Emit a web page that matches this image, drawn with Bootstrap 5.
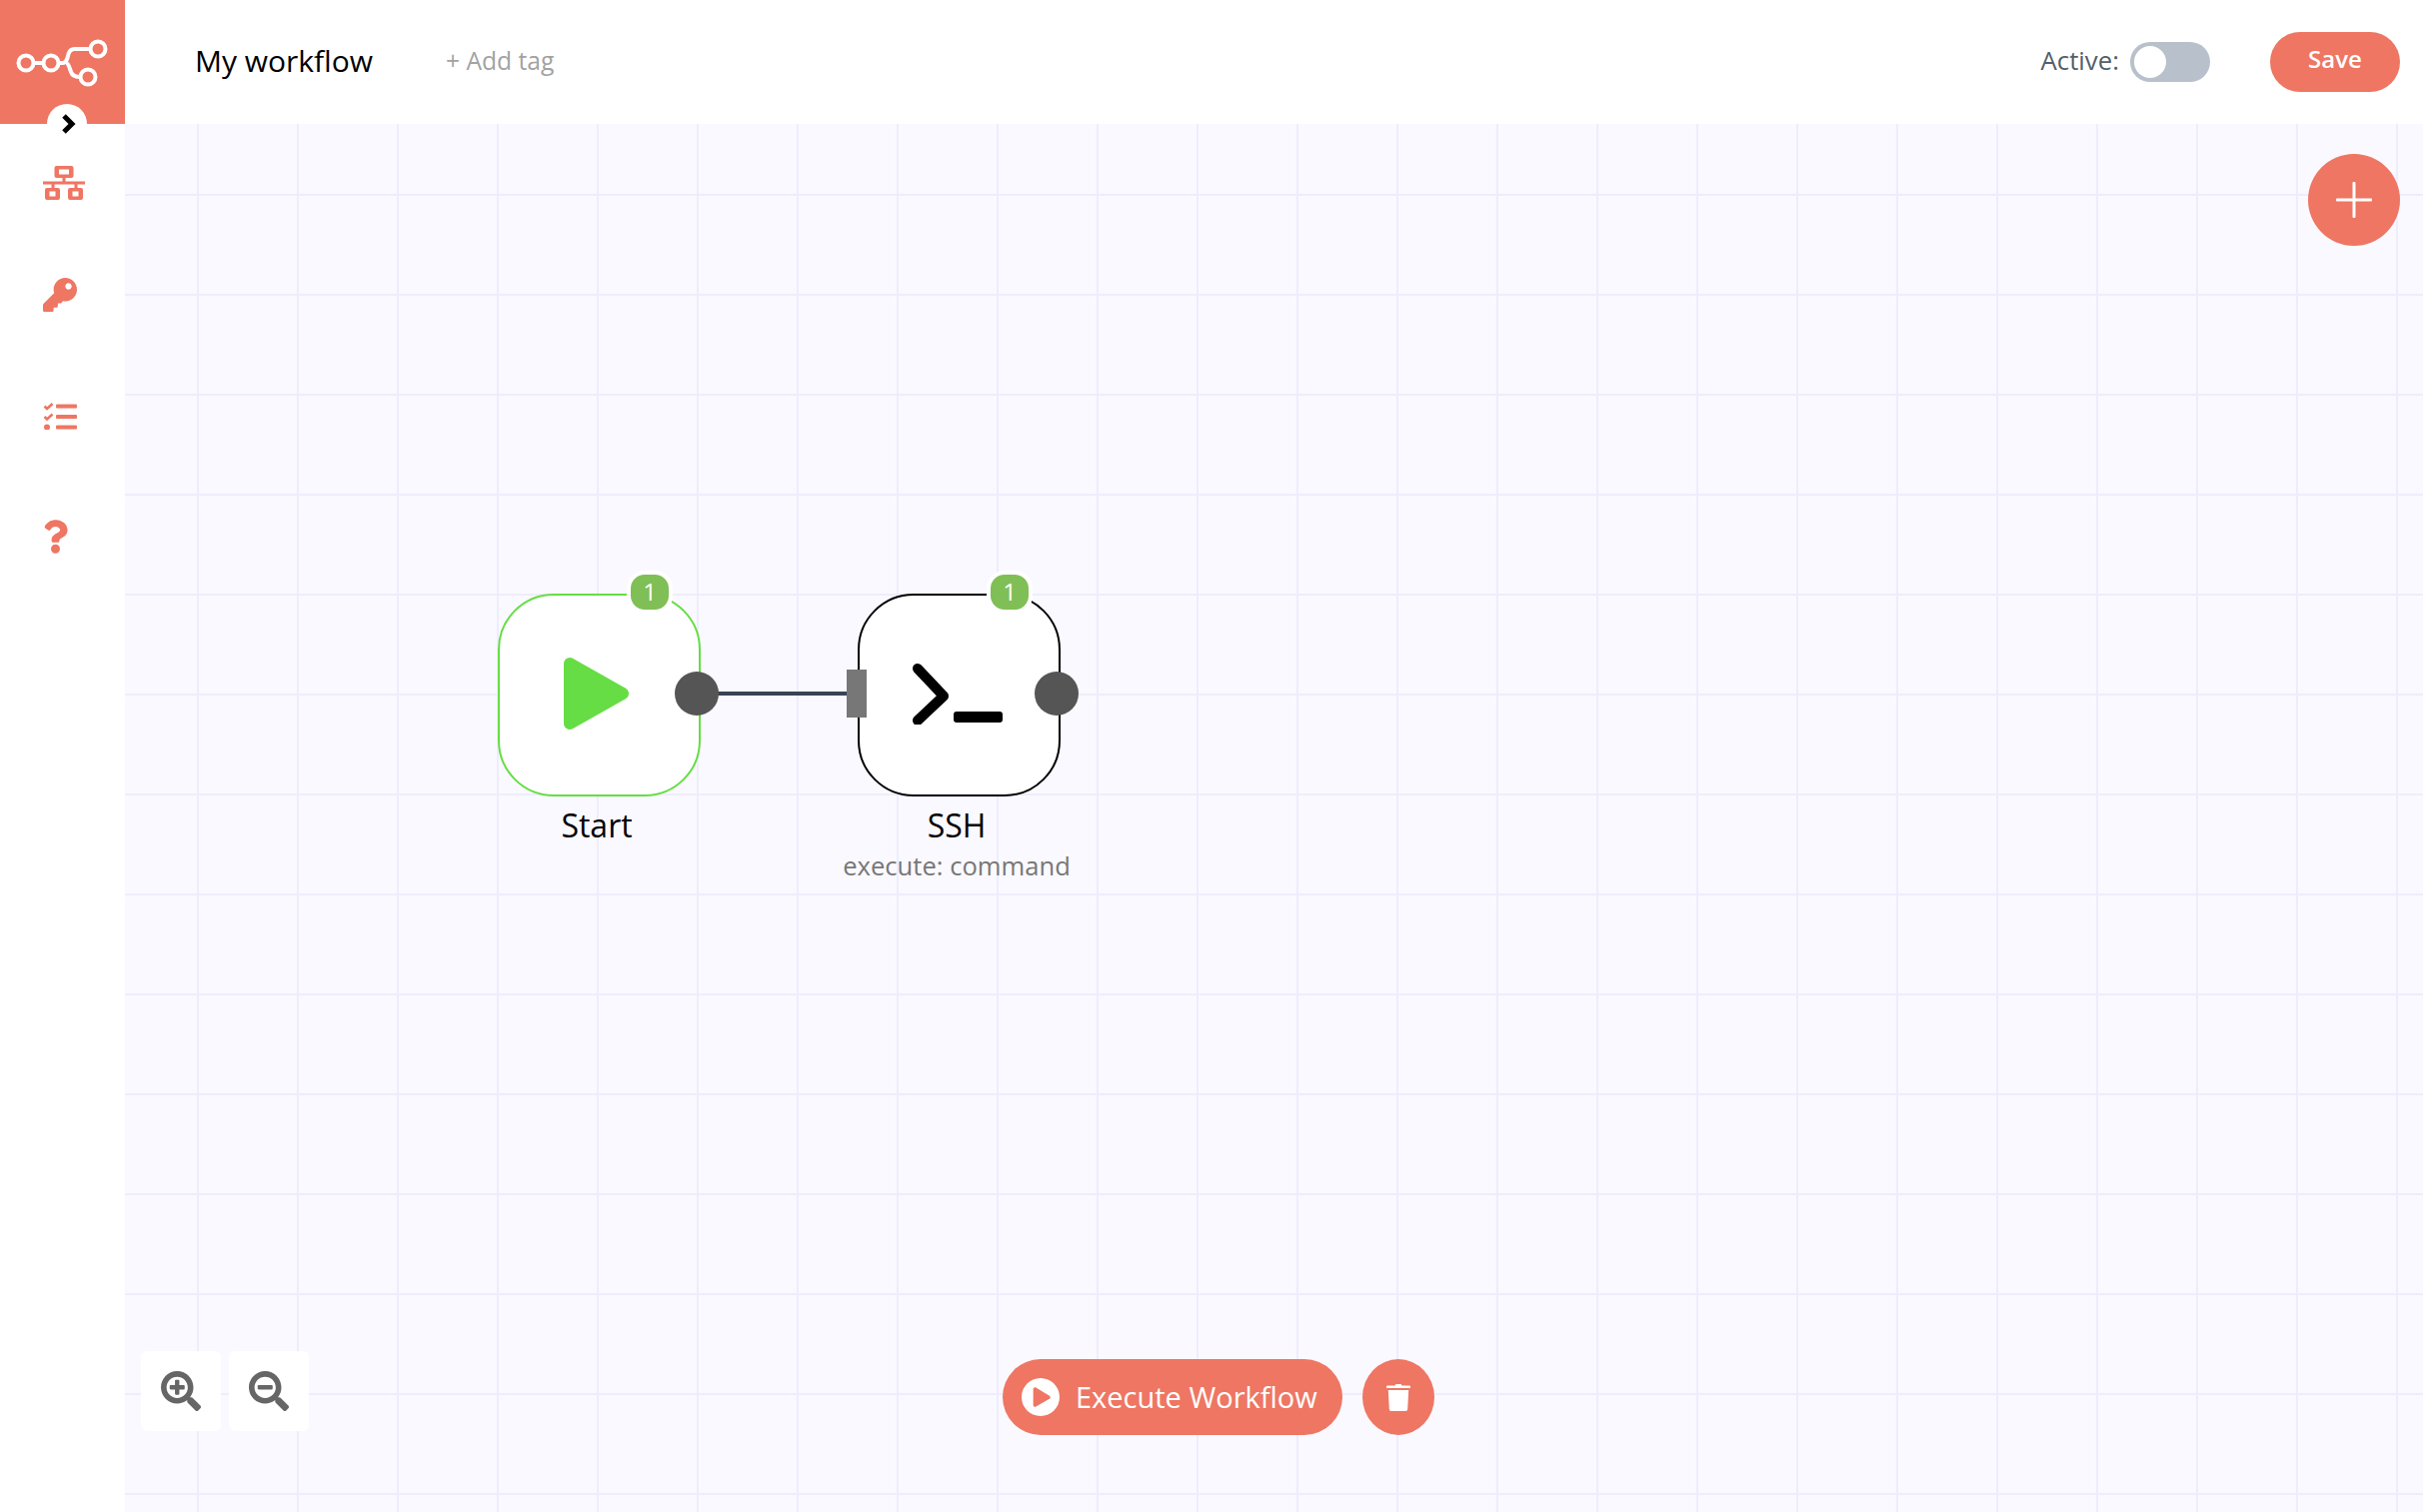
<!doctype html>
<html lang="en">
<head>
<meta charset="utf-8">
<title>My workflow</title>
<link href="https://cdn.jsdelivr.net/npm/bootstrap@5.3.0/dist/css/bootstrap.min.css" rel="stylesheet">
<style>
html,body{height:100%;margin:0}
body{font-family:"Open Sans","Liberation Sans",sans-serif;background:#fff;overflow:hidden;color:#000}
.app-shell{width:2424px;height:1513px}
.top-bar{height:124px;background:#fff}
.logo-box{width:125px;height:124px;background:#ee7663}
.wf-name{font-size:30px;line-height:40px;margin-left:70px;width:251px;color:#000;padding-bottom:3px}
.add-tag{font-size:24.600px;color:#a2a2a2;line-height:40px;padding-bottom:3px}
.active-label{font-size:25.800px;color:#555f6b;margin-right:11px;line-height:40px;padding-bottom:4px}
.toggle-track{width:80px;height:40px;border-radius:20px;background:#b8c1cb;padding:4px;margin-right:60px}
.toggle-knob{width:32px;height:32px;border-radius:50%;background:#fff}
.btn.save-btn{width:130px;height:60px;border-radius:30px;background:#ee7663;color:#fff;border:0;font-size:24px;font-weight:600;margin-right:23px;padding:0 0 6px}
.side-bar{width:125px;background:#fff;padding-top:42px}
.side-item{height:34px;margin-left:43px}
.side-net{margin-bottom:78px}
.side-key{margin-bottom:91px}
.side-tasks{height:27px;margin-bottom:90px}
.canvas-area{position:relative;background-color:#faf9ff;background-image:linear-gradient(to right,#eeedfd 2px,transparent 2px),linear-gradient(to bottom,#eeedfd 2px,transparent 2px);background-size:100px 100px;background-position:72px 0,0 70px}
.expand-dot{position:absolute;left:47px;top:104px;width:40px;height:40px;border-radius:50%;background:#fff}
.chev{margin-left:3px}
.add-fab{position:absolute;left:2184px;top:30px;width:92px;height:92px;border-radius:50%;background:#ee7663;border:0;padding:0}
.zoom-btn{position:absolute;top:1228px;width:80px;height:80px;background:#fff;border-radius:6px;border:0;padding:0}
.zoom-in{left:16px}.zoom-out{left:104px}
.run-btn{position:absolute;left:878px;top:1236px;width:340px;height:76px;border-radius:38px;background:#ee7663;color:#fff;border:0;font-size:29px;font-weight:500;padding:0 0 1px 73px;text-align:left;line-height:75px}
.run-ico{position:absolute;left:19px;top:19px}
.trash-btn{position:absolute;left:1238px;top:1236px;width:72px;height:76px;border-radius:50%;background:#ee7663;border:0;padding:0}
.wf-node{position:absolute;top:470px;width:203px;height:203px;background:#fff;border-radius:56px;border:2px solid #000}
.node-start{left:373px;border-color:#66dd44}
.node-ssh{left:733px}
.node-badge{position:absolute;top:447px;width:46px;height:43px;border:4px solid #fff;border-radius:18px;background:#7fbf55;color:#fff;font-size:24px;line-height:34px;text-align:center;font-weight:500}
.badge-start{left:502px}.badge-ssh{left:862px}
.out-dot{position:absolute;top:548px;width:44px;height:44px;border-radius:50%;background:#555}
.out-start{left:550px}.out-ssh{left:910px}
.in-port{position:absolute;left:722px;top:546px;width:20px;height:48px;background:#777}
.wire{position:absolute;left:590px;top:568px;width:135px;height:4px;background:#374455}
.node-icon{position:absolute}
.ico-start{left:438px;top:532px}.ico-ssh{left:783px;top:537px}
.node-label{position:absolute;top:682px;width:360px;text-align:center;font-size:32px;line-height:40px;color:#000}
.label-start{left:292px}.label-ssh{left:652px}
.node-sub{position:absolute;left:652px;top:727px;width:360px;text-align:center;font-size:25.600px;line-height:32px;color:#777}
</style>
</head>
<body>
<div class="app-shell d-flex flex-column position-relative">
  <header class="top-bar d-flex align-items-center">
    <div class="logo-box flex-shrink-0">
      <svg width="125" height="124" viewBox="0 0 125 124" fill="none" stroke="#fff" stroke-width="4"><circle cx="26" cy="63" r="7.500"/><circle cx="51" cy="63" r="7.500"/><circle cx="98" cy="49" r="7.500"/><circle cx="88" cy="77" r="7.500"/><path d="M33.500 63h10M58.500 63h4c3 0 4-2 5-5l1-4c1-3 3-5 6-5h16.500M66 63c2 0 3 3 4 6l1 3c1 3 3 5 9.500 5"/></svg>
    </div>
    <div class="wf-name">My workflow</div>
    <div class="add-tag">+ Add tag</div>
    <div class="ms-auto d-flex align-items-center">
      <span class="active-label">Active:</span>
      <span class="toggle-track d-block"><span class="toggle-knob d-block"></span></span>
      <button class="btn save-btn" type="button">Save</button>
    </div>
  </header>
  <div class="d-flex flex-grow-1">
    <nav class="side-bar flex-shrink-0">
      <div class="side-item side-net"><svg width="42" height="34" viewBox="0 0 42 34" fill="#ee7663" fill-rule="evenodd"><path d="M13.500 0h15a2 2 0 0 1 2 2v8a2 2 0 0 1-2 2h-6v3.500H42v3H34.500V22h3.500a2 2 0 0 1 2 2v8a2 2 0 0 1-2 2H27a2 2 0 0 1-2-2v-8a2 2 0 0 1 2-2h4.500v-3.500h-20V22H15a2 2 0 0 1 2 2v8a2 2 0 0 1-2 2H4a2 2 0 0 1-2-2v-8a2 2 0 0 1 2-2h4.500v-3.500H0v-3h19.500V12h-6a2 2 0 0 1-2-2V2a2 2 0 0 1 2-2zM16 3.500v5h10v-5zM6.500 25.500v5h6v-5zM29.500 25.500v5h6v-5z"/></svg></div>
      <div class="side-item side-key"><svg width="34" height="34" viewBox="0 0 512 512" fill="#ee7663"><path d="M512 176.001C512 273.203 433.202 352 336 352c-11.22 0-22.19-1.062-32.827-3.069l-24.012 27.014A23.999 23.999 0 0 1 261.223 384H224v40c0 13.255-10.745 24-24 24h-40v40c0 13.255-10.745 24-24 24H24c-13.255 0-24-10.745-24-24v-78.059c0-6.365 2.529-12.47 7.029-16.971l161.802-161.802C163.108 213.814 160 195.271 160 176 160 78.798 238.797.001 335.999 0 433.488-.001 512 78.511 512 176.001zM336 128c0 26.51 21.49 48 48 48s48-21.49 48-48-21.49-48-48-48-48 21.49-48 48z"/></svg></div>
      <div class="side-item side-tasks"><svg width="34" height="27" viewBox="0 0 34 27" fill="#ee7663"><rect x="13" y="1.500" width="21" height="4" rx="1"/><rect x="13" y="12" width="21" height="4" rx="1"/><rect x="13" y="22.500" width="21" height="4" rx="1"/><circle cx="4" cy="24.500" r="3"/><path d="M1.500 3.500l2.500 2.500L9.500 1M1.500 14l2.500 2.500L9.500 11.500" fill="none" stroke="#ee7663" stroke-width="2.600"/></svg></div>
      <div class="side-item"><svg width="25" height="34" viewBox="0 0 384 512" fill="#ee7663"><path d="M202.021 0C122.202 0 70.503 32.703 29.914 91.026c-7.363 10.58-5.093 25.086 5.178 32.874l43.138 32.709c10.373 7.865 25.132 6.026 33.253-4.148 25.049-31.381 43.63-49.449 82.757-49.449 30.764 0 68.816 19.799 68.816 49.631 0 22.552-18.617 34.134-48.993 51.164-35.423 19.86-82.299 44.576-82.299 106.405V320c0 13.255 10.745 24 24 24h72.471c13.255 0 24-10.745 24-24v-5.773c0-42.86 125.268-44.645 125.268-160.627C377.504 66.256 286.902 0 202.021 0zM192 373.459c-38.196 0-69.271 31.075-69.271 69.271 0 38.195 31.075 69.27 69.271 69.27s69.271-31.075 69.271-69.271-31.075-69.27-69.271-69.27z"/></svg></div>
    </nav>
    <main class="canvas-area flex-grow-1">
      <div class="wire"></div>
      <div class="wf-node node-start"></div>
      <div class="wf-node node-ssh"></div>
      <div class="node-badge badge-start">1</div>
      <div class="node-badge badge-ssh">1</div>
      <svg class="node-icon ico-start" width="68" height="76" viewBox="0 0 68 76"><path d="M7 8l53 30L7 68z" fill="#66dd44" stroke="#66dd44" stroke-width="12" stroke-linejoin="round"/></svg>
      <svg class="node-icon ico-ssh" width="100" height="64" viewBox="0 0 100 64"><path d="M10 8l26 27.500L10 60" fill="none" stroke="#000" stroke-width="10" stroke-linecap="round" stroke-linejoin="round"/><rect x="46" y="51" width="49" height="11" rx="3"/></svg>
      <div class="out-dot out-start"></div>
      <div class="out-dot out-ssh"></div>
      <div class="in-port"></div>
      <div class="node-label label-start">Start</div>
      <div class="node-label label-ssh">SSH</div>
      <div class="node-sub">execute: command</div>
      <button class="add-fab" type="button" aria-label="Add node"><svg width="36" height="36" viewBox="0 0 36 36" fill="#fff"><rect x="16.500" width="3" height="36" rx="1"/><rect y="16.500" width="36" height="3" rx="1"/></svg></button>
      <button class="zoom-btn zoom-in" type="button" aria-label="Zoom in"><svg width="40" height="40" viewBox="0 0 512 512" fill="#666"><path d="M304 192v32c0 6.600-5.400 12-12 12h-56v56c0 6.600-5.400 12-12 12h-32c-6.600 0-12-5.400-12-12v-56h-56c-6.600 0-12-5.400-12-12v-32c0-6.600 5.400-12 12-12h56v-56c0-6.600 5.400-12 12-12h32c6.600 0 12 5.400 12 12v56h56c6.600 0 12 5.400 12 12zm201 284.700L476.700 505c-9.400 9.400-24.600 9.400-33.900 0L343 405.300c-4.500-4.500-7-10.600-7-17V372c-35.300 27.600-79.700 44-128 44C93.100 416 0 322.900 0 208S93.100 0 208 0s208 93.100 208 208c0 48.300-16.400 92.700-44 128h16.300c6.400 0 12.500 2.500 17 7l99.700 99.700c9.300 9.400 9.300 24.600 0 34zM344 208c0-75.200-60.800-136-136-136S72 132.800 72 208s60.800 136 136 136 136-60.800 136-136z"/></svg></button>
      <button class="zoom-btn zoom-out" type="button" aria-label="Zoom out"><svg width="40" height="40" viewBox="0 0 512 512" fill="#666"><path d="M304 192v32c0 6.600-5.400 12-12 12H124c-6.600 0-12-5.400-12-12v-32c0-6.600 5.400-12 12-12h168c6.600 0 12 5.400 12 12zm201 284.700L476.700 505c-9.400 9.400-24.600 9.400-33.900 0L343 405.300c-4.500-4.500-7-10.600-7-17V372c-35.300 27.600-79.700 44-128 44C93.100 416 0 322.900 0 208S93.100 0 208 0s208 93.100 208 208c0 48.300-16.400 92.700-44 128h16.300c6.400 0 12.500 2.500 17 7l99.700 99.700c9.300 9.400 9.300 24.600 0 34zM344 208c0-75.200-60.800-136-136-136S72 132.800 72 208s60.800 136 136 136 136-60.800 136-136z"/></svg></button>
      <button class="run-btn" type="button"><svg class="run-ico" width="38" height="38" viewBox="8 8 496 496" fill="#fff"><path d="M256 8C119 8 8 119 8 256s111 248 248 248 248-111 248-248S393 8 256 8zm115.700 272l-176 101c-15.800 8.800-35.700-2.500-35.700-20V152c0-17.400 19.800-28.800 35.700-20l176 107c16.400 9.200 16.400 32.900 0 41z"/></svg>Execute Workflow</button>
      <button class="trash-btn" type="button" aria-label="Delete"><svg width="24" height="28" viewBox="0 0 24 28" fill="#fff"><path d="M1 2.500h7.500L9.500 1h5l1 1.500H23a1 1 0 0 1 1 1V5H0V3.500a1 1 0 0 1 1-1zM1.800 7h20.400l-1 19a2 2 0 0 1-2 2H4.800a2 2 0 0 1-2-2z"/></svg></button>
    </main>
  </div>
  <div class="expand-dot d-flex align-items-center justify-content-center"><svg class="chev" width="14" height="20" viewBox="0 0 14 20" fill="none" stroke="#000" stroke-width="5"><path d="M2 2l8 8-8 8"/></svg></div>
</div>
<script src="https://cdn.jsdelivr.net/npm/bootstrap@5.3.0/dist/js/bootstrap.bundle.min.js"></script>
</body>
</html>
